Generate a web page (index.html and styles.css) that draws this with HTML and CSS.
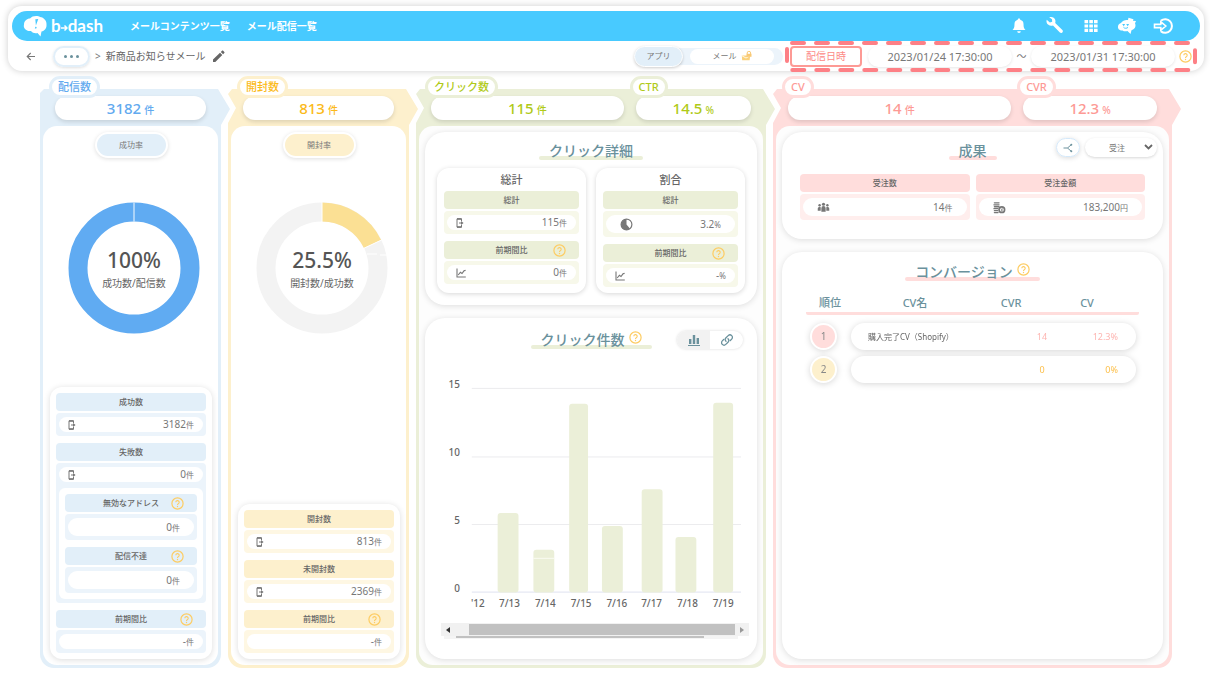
FILE: index.html
```html
<!DOCTYPE html>
<html lang="ja">
<head>
<meta charset="utf-8">
<title>b→dash メール配信レポート</title>
<link rel="stylesheet" href="styles.css">
</head>
<body>
<svg class="sprite" aria-hidden="true">
  <symbol id="i-help" viewBox="0 0 13 13"><circle cx="6.5" cy="6.5" r="5.6" fill="none" stroke="currentColor" stroke-width="1.2"/><path d="M4.8 5.3a1.7 1.7 0 1 1 2.5 1.5c-.6.35-.8.6-.8 1.2" fill="none" stroke="currentColor" stroke-width="1.1"/><circle cx="6.5" cy="9.5" r=".7" fill="currentColor"/></symbol>
  <symbol id="i-phone" viewBox="0 0 8 10"><path d="M5.5 3V.8H1v8.4h4.5V7" fill="none" stroke="currentColor" stroke-width="1"/><path d="M1 1h4.500M1 9h4.500" stroke="currentColor" stroke-width="1.400"/><path d="M3 4.400h2V3l2.600 2L5 7V5.600H3z" fill="currentColor"/></symbol>
  <symbol id="i-line" viewBox="0 0 10 10"><path d="M1 .5V9h8.800M2.200 7l2.200-2.800L6 5.500l2-2.700 1.600-.4" fill="none" stroke="currentColor" stroke-width="1.1"/></symbol>
  <symbol id="i-pie" viewBox="0 0 13 13"><circle cx="6.500" cy="6.500" r="5.400" fill="none" stroke="currentColor" stroke-width="1.200"/><path d="M6.500 1v5.500l3.600 4.200A5.500 5.500 0 1 1 6.500 1z" fill="currentColor"/></symbol>
  <symbol id="i-people" viewBox="0 0 14 11"><g fill="currentColor"><circle cx="7" cy="2" r="1.700"/><circle cx="2.800" cy="3" r="1.300"/><circle cx="11.200" cy="3" r="1.300"/><path d="M4.700 10V6.200a2.300 2.300 0 0 1 4.600 0V10zM.8 9V6.600a2 2 0 0 1 3.200-1.500V9zM10 9V5.100a2 2 0 0 1 3.200 1.500V9z"/></g></symbol>
  <symbol id="i-coins" viewBox="0 0 14 13"><path d="M1.500 1.500h5M1 3.600h5.500M1.500 5.700h5M1 7.800h4.200M1.500 9.900h3.500M1.500 12h4" stroke="currentColor" stroke-width="1.400" stroke-linecap="round"/><circle cx="9.500" cy="8.800" r="3" fill="none" stroke="currentColor" stroke-width="1.800"/><path d="M8.300 7.200l1.200 1.600 1.200-1.600M9.500 8.800v2M8.500 9.300h2" stroke="currentColor" stroke-width=".7" fill="none"/></symbol>
</svg>

<header class="topbar">
  <div class="topbar__main">
    <a class="logo" href="#" aria-label="b→dash">
      <svg class="logo__mark" viewBox="0 0 25 22"><path d="M8 16C3 16.500 0 13 1 9.500 1 6 4 3.500 7 3.500 9 .5 15 .3 17 2c4 .4 7 4 6.500 8 .3 3-2 6-5 6.500L17.500 21.500 14.500 18C12 18.500 9.500 18 8 16z" fill="#fff"/><path d="M15.300 4l-3 .2.600 6.300zM12.300 11.800l1.400.2-.4 1.600-1.500-.2z" fill="#48caff"/></svg>
      <span>b</span><svg class="logo__arrow" viewBox="0 0 7 8"><path d="M0 4h6M3.500 1.500 6 4 3.500 6.500" fill="none" stroke="#fff" stroke-width="1.500"/></svg><span>dash</span>
    </a>
    <nav class="nav">
      <a href="#">メールコンテンツ一覧</a>
      <a href="#">メール配信一覧</a>
    </nav>
    <div class="tools">
      <button aria-label="通知"><svg viewBox="0 0 20 18"><path d="M10 1.500c.9 0 1.200.6 1.200 1.200C13.500 3.300 14.500 5 14.500 7c0 3.500.6 4.800 2 6H3.500c1.400-1.200 2-2.500 2-6 0-2 1-3.700 3.300-4.300 0-.6.300-1.200 1.200-1.200zM8.200 14.200h3.600a1.800 1.800 0 0 1-3.600 0z" fill="#fff"/></svg></button>
      <button aria-label="設定"><svg viewBox="0 0 20 20"><path d="M1.700 3.800l3.200 2.700L7.200 5.800 7 3.300 4.200 1.300C7 .4 9.600 1.600 10.300 4c.3 1.200.2 2.200-.1 2.900l7.200 7c1.500 1.700-.9 4-2.500 2.500L8 9.400C5.400 10.400 2.500 9 1.700 6.800 1.400 5.700 1.400 4.600 1.700 3.800z" fill="#fff"/></svg></button>
      <button aria-label="アプリ一覧"><svg viewBox="0 0 20 18"><path d="M3.500 3h3.600v3.200H3.500zM8.300 3h3.600v3.200H8.300zM13 3h3.600v3.200H13zM3.500 7.400h3.600v3.200H3.500zM8.300 7.400h3.600v3.200H8.300zM13 7.400h3.600v3.200H13zM3.500 11.800h3.600V15H3.500zM8.300 11.800h3.600V15H8.300zM13 11.800h3.600V15H13z" fill="#fff"/></svg></button>
      <button aria-label="サポート"><svg viewBox="0 0 20 18"><path d="M5.500 13.500C3 13.800.5 12 1 9.500 1 7.500 2.500 6.500 4 6 5.500 3.500 8.500 2.500 11 3l.5-2.200 5 1.400-.6 1.600 3.100.3-1 2.200C19.500 9.500 17.500 12.500 14.500 13.200L13.500 17 10.500 14C9 14.500 7 14.500 5.500 13.500z" fill="#fff"/><path d="M5.500 7.500h2.300M9.500 7.500h2.300M6.700 7.500v1.600M10.700 7.500v1.600M6.500 10.300c1 1.300 3.500 1.300 4.500 0" stroke="#48caff" stroke-width="1" fill="none"/></svg></button>
      <button aria-label="ログアウト"><svg viewBox="0 0 20 18"><path d="M8 3.600A6.800 6.800 0 1 1 8 14.400" fill="none" stroke="#fff" stroke-width="2"/><path d="M1.500 7.400h6.300V4.800l5 4.200-5 4.200v-2.600H1.500z" fill="none" stroke="#fff" stroke-width="1.600"/></svg></button>
    </div>
  </div>
  <div class="topbar__sub">
    <button class="back" aria-label="戻る"><svg viewBox="0 0 10 9"><path d="M9 4.500H1.500M4.700 1 1.200 4.500 4.700 8" fill="none" stroke="#777" stroke-width="1.100"/></svg></button>
    <button class="more" aria-label="階層を表示"><i></i><i></i><i></i></button>
    <span class="crumb-sep">&gt;</span>
    <h1 class="crumb">新商品お知らせメール</h1>
    <button class="edit" aria-label="名前を編集"><svg viewBox="0 0 13 13"><path d="M1 9.600 8 2.700l2.300 2.300-7 7H1zM8.800 1.900 10 .8c.4-.4.8-.4 1.200 0l1.100 1.100c.4.4.4.8 0 1.200L11.100 4.200z" fill="#666"/></svg></button>
    <div class="channel">
      <button class="channel__on">アプリ</button>
      <button class="channel__off">メール <svg viewBox="0 0 11 10"><path d="M.8 4.500h8.400l-.6 4.800H1.200z" fill="#fbd27c"/><path d="M1 4.800l4 2.200 4-2.200" fill="none" stroke="#fff" stroke-width=".8"/><path d="M6.200 3V2a1.700 1.700 0 0 1 3.400 0v1" fill="none" stroke="#f8c976" stroke-width="1"/><path d="M5.500 2.800h5v3h-5z" fill="#f8c976"/></svg></button>
    </div>
    <div class="period">
      <svg class="period__dash"><rect x="2" y="2" rx="5"/></svg>
      <button class="period__label">配信日時</button>
      <input type="text" aria-label="開始日時" value="2023/01/24 17:30:00">
      <span class="period__to">〜</span>
      <input type="text" aria-label="終了日時" value="2023/01/31 17:30:00">
      <svg class="help"><use href="#i-help"/></svg>
    </div>
  </div>
</header>

<main class="stages">
  <section class="stage stage--blue">
    <div class="kpis">
      <div class="kpi"><h2>配信数</h2><p>3182<small>件</small></p></div>
    </div>
    <div class="frame"><div class="body">
      <button class="rate">成功率</button>
      <div class="donut">
        <svg viewBox="0 0 132 132"><circle cx="66" cy="66" r="56" fill="none" stroke="#60abf2" stroke-width="19"/><path d="M66 0v20" stroke="#c5e0fa" stroke-width="1.500"/></svg>
        <div class="donut__text"><strong>100%</strong><span>成功数/配信数</span></div>
      </div>
      <div class="stats">
        <div class="stat"><h3>成功数</h3><div class="box"><p class="val"><svg class="ph"><use href="#i-phone"/></svg><span>3182<small>件</small></span></p></div></div>
        <div class="stat"><h3>失敗数</h3><div class="box"><p class="val"><svg class="ph"><use href="#i-phone"/></svg><span>0<small>件</small></span></p>
          <div class="nested">
            <div class="stat"><h3>無効なアドレス<svg class="help"><use href="#i-help"/></svg></h3><div class="box"><p class="val val--roomy"><span>0<small>件</small></span></p></div></div>
            <div class="stat"><h3>配信不達<svg class="help"><use href="#i-help"/></svg></h3><div class="box"><p class="val val--roomy"><span>0<small>件</small></span></p></div></div>
          </div></div></div>
        <div class="stat"><h3>前期間比<svg class="help"><use href="#i-help"/></svg></h3><div class="box"><p class="val"><span>-<small>件</small></span></p></div></div>
      </div>
    </div></div>
  </section>

  <section class="stage stage--yellow stage--next">
    <div class="kpis">
      <div class="kpi"><h2>開封数</h2><p>813<small>件</small></p></div>
    </div>
    <div class="frame"><div class="body">
      <button class="rate">開封率</button>
      <div class="donut">
        <svg viewBox="0 0 132 132"><circle cx="66" cy="66" r="56" fill="none" stroke="#f3f3f3" stroke-width="19"/><path d="M66 10A56 56 0 0 1 116.500 42" fill="none" stroke="#fbe094" stroke-width="19"/><path d="M66 0v20M107.500 46.500l18-8.500M111 52h10M124 53h7" stroke="#fff" stroke-width="1"/></svg>
        <div class="donut__text"><strong>25.5%</strong><span>開封数/成功数</span></div>
      </div>
      <div class="stats">
        <div class="stat"><h3>開封数</h3><div class="box"><p class="val"><svg class="ph"><use href="#i-phone"/></svg><span>813<small>件</small></span></p></div></div>
        <div class="stat"><h3>未開封数</h3><div class="box"><p class="val"><svg class="ph"><use href="#i-phone"/></svg><span>2369<small>件</small></span></p></div></div>
        <div class="stat"><h3>前期間比<svg class="help"><use href="#i-help"/></svg></h3><div class="box"><p class="val"><span>-<small>件</small></span></p></div></div>
      </div>
    </div></div>
  </section>

  <section class="stage stage--green stage--next">
    <div class="kpis">
      <div class="kpi kpi--wide"><h2>クリック数</h2><p>115<small>件</small></p></div>
      <div class="kpi"><h2>CTR</h2><p>14.5<small>%</small></p></div>
    </div>
    <div class="frame"><div class="body body--shade">
      <div class="card card--clicks">
        <div class="card__head"><h2 class="title">クリック詳細</h2></div>
        <div class="pair">
          <div class="mini"><h4>総計</h4>
            <div class="stat"><h3>総計</h3><div class="box"><p class="val"><svg class="ph"><use href="#i-phone"/></svg><span>115<small>件</small></span></p></div></div>
            <div class="stat"><h3>前期間比<svg class="help"><use href="#i-help"/></svg></h3><div class="box"><p class="val"><svg class="ln"><use href="#i-line"/></svg><span>0<small>件</small></span></p></div></div>
          </div>
          <div class="mini"><h4>割合</h4>
            <div class="stat"><h3>総計</h3><div class="box"><p class="val val--roomy"><svg class="big"><use href="#i-pie"/></svg><span>3.2<small>%</small></span></p></div></div>
            <div class="stat"><h3>前期間比<svg class="help"><use href="#i-help"/></svg></h3><div class="box"><p class="val"><svg class="ln"><use href="#i-line"/></svg><span>-<small>%</small></span></p></div></div>
          </div>
        </div>
      </div>
      <div class="card card--chart">
        <div class="card__head"><h2 class="title">クリック件数<svg class="help"><use href="#i-help"/></svg></h2>
          <div class="view">
            <button class="view__on" aria-label="グラフ"><svg viewBox="0 0 14 14"><path d="M2 6h2.400v5H2zM5.800 2h2.400v9H5.800zM9.600 5H12v6H9.600zM1 12h12v1H1z" fill="#6a919c"/></svg></button>
            <button aria-label="リンク"><svg viewBox="0 0 14 14"><g fill="none" stroke="#6a919c" stroke-width="1.300" stroke-linecap="round"><path d="M6 8.300a2.500 2.500 0 0 1 0-3.500L8.200 2.600a2.400 2.400 0 0 1 3.500 3.500L10.300 7.500"/><path d="M8 5.700a2.500 2.500 0 0 1 0 3.500l-2.200 2.200a2.400 2.400 0 0 1-3.500-3.500L3.700 6.500"/></g></svg></button>
          </div>
        </div>
        <div class="plot">
          <svg class="chart" viewBox="0 0 310 250" role="img" aria-label="日別クリック件数">
            <path d="M31 13.500h271M31 82.500h271M31 150.500h271" stroke="#ececee"/>
            <path d="M31 218.500h271" stroke="#dfe3f0"/>
            <g class="bars"><rect x="57" y="139" width="21" height="80" rx="3"/><rect x="93" y="176" width="21" height="43" rx="3"/><rect x="129" y="29" width="19" height="190" rx="3"/><rect x="162" y="152" width="21" height="67" rx="3"/><rect x="202" y="115" width="21" height="104" rx="3"/><rect x="236" y="163" width="21" height="56" rx="3"/><rect x="274" y="28" width="20" height="191" rx="3"/></g>
            <path d="M93 184.500h21" stroke="#fafbf2"/>
            <g class="ylab"><text x="19" y="13">15</text><text x="19" y="82">10</text><text x="19" y="150">5</text><text x="19" y="218">0</text></g>
            <g class="xlab"><text x="37" y="234">'12</text><text x="69" y="234">7/13</text><text x="105" y="234">7/14</text><text x="141" y="234">7/15</text><text x="177" y="234">7/16</text><text x="212" y="234">7/17</text><text x="248" y="234">7/18</text><text x="284" y="234">7/19</text></g>
          </svg>
          <div class="scroll"><span class="scroll__prev"></span><span class="scroll__thumb"></span><span class="scroll__next"></span></div>
          <div class="scroll-thin"><span></span></div>
        </div>
      </div>
    </div></div>
  </section>

  <section class="stage stage--pink stage--next">
    <div class="kpis">
      <div class="kpi kpi--wide"><h2>CV</h2><p>14<small>件</small></p></div>
      <div class="kpi"><h2>CVR</h2><p>12.3<small>%</small></p></div>
    </div>
    <div class="frame"><div class="body body--shade">
      <div class="card card--result">
        <div class="card__head"><h2 class="title">成果</h2>
          <div class="controls">
            <button class="branch" aria-label="分岐"><svg viewBox="0 0 10 10"><path d="M.5 5h4L8.500 1.500M4.500 5l4 3.500" fill="none" stroke="#6a919c" stroke-width="1"/><circle cx="8.300" cy="1.700" r="1" fill="#6a919c"/><circle cx="8.300" cy="8.300" r="1" fill="#6a919c"/></svg></button>
            <div class="select"><select aria-label="成果の種類"><option>受注</option></select><svg viewBox="0 0 9 6"><path d="M1 1l3.500 3.500L8 1" fill="none" stroke="#666" stroke-width="1.800"/></svg></div>
          </div>
        </div>
        <div class="pair">
          <div class="stat"><h3>受注数</h3><div class="box"><p class="val val--roomy"><svg class="big"><use href="#i-people"/></svg><span>14<small>件</small></span></p></div></div>
          <div class="stat"><h3>受注金額</h3><div class="box"><p class="val val--roomy"><svg class="big"><use href="#i-coins"/></svg><span>183,200<small>円</small></span></p></div></div>
        </div>
      </div>
      <div class="card card--conv">
        <div class="card__head"><h2 class="title">コンバージョン<svg class="help"><use href="#i-help"/></svg></h2></div>
        <table class="ranking">
          <thead><tr><th>順位</th><th>CV名</th><th>CVR</th><th>CV</th></tr></thead>
          <tbody>
            <tr><td class="rank"><span>1</span></td><td class="name">購入完了CV（Shopify）</td><td class="num">14</td><td class="pct">12.3%</td></tr>
            <tr class="second"><td class="rank"><span>2</span></td><td class="name"></td><td class="num">0</td><td class="pct">0%</td></tr>
          </tbody>
        </table>
      </div>
    </div></div>
  </section>
</main>
</body>
</html>
```
FILE: styles.css
```css
* { box-sizing: border-box; }

body {
  margin: 0;
  min-height: 100vh;
  padding: 6px 6px 12px 8px;
  display: flex;
  flex-direction: column;
  background: #fff;
  color: #777;
  font: 8px/1.2 "Noto Sans", "Noto Sans CJK JP", sans-serif;
}

h1, h2, h3, h4, p { margin: 0; font-weight: 400; }
button, input, select { font: inherit; color: inherit; border: 0; padding: 0; background: none; }
button { display: flex; align-items: center; justify-content: center; cursor: pointer; }
a { color: inherit; text-decoration: none; }
svg { display: block; flex: none; }
.sprite { position: absolute; width: 0; height: 0; }
.help { width: 13px; height: 13px; color: #fdcc62; }

/* top bar */
.topbar {
  padding: 5px 4px 0;
  border-radius: 14px;
  background: #fff;
  box-shadow: 0 0 7px rgba(0, 0, 0, .2);
}
.topbar__main {
  height: 30px;
  padding: 0 27px 0 11px;
  display: flex;
  align-items: center;
  border-radius: 15px;
  background: #48caff;
  color: #fff;
}
.logo { display: flex; align-items: center; width: 107px; font: 700 17px/22px Lato, sans-serif; }
.logo__mark { width: 25px; height: 22px; margin-right: 3px; }
.logo__arrow { width: 7px; height: 8px; margin-top: 3px; }
.nav { display: flex; gap: 17px; font-size: 10px; font-weight: 700; }
.tools { margin-left: auto; display: flex; gap: 16px; }
.tools button, .tools svg { width: 20px; height: 20px; }

.topbar__sub { height: 30px; display: flex; align-items: center; font-size: 10px; }
.back { width: 18px; margin-left: 10px; }
.back svg { width: 10px; height: 9px; }
.more {
  width: 37px; height: 21px; margin-left: 13px; gap: 3px;
  border: 2px solid #e2eff9; border-radius: 11px;
  box-shadow: 0 1px 3px rgba(0, 0, 0, .12);
}
.more i { width: 3px; height: 3px; border-radius: 50%; background: #6a919c; }
.crumb-sep { margin: 0 5px; }
.crumb { font-size: 10px; color: #666; }
.edit { margin-left: 6px; }
.edit svg { width: 13px; height: 13px; }

.channel {
  height: 17px; margin-left: auto; padding-right: 9px;
  display: flex; align-items: center; gap: 7px;
  border-radius: 9px; background: #ecf4fb; font-size: 8px;
}
.channel__on {
  width: 49px; height: 21px;
  border: 1px solid #fff; border-radius: 11px; background: #e2eff9;
  box-shadow: 0 1px 3px rgba(0, 0, 0, .2);
}
.channel__off { width: 84px; height: 15px; gap: 4px; border-radius: 8px; background: #fff; }
.channel__off svg { width: 11px; height: 10px; }

.period { position: relative; height: 30px; margin: 0 3px 0 2px; padding: 0 5px; display: flex; align-items: center; }
.period__dash { position: absolute; inset: 0; width: 100%; height: 100%; overflow: visible; pointer-events: none; }
.period__dash rect {
  width: calc(100% - 4px); height: calc(100% - 3px);
  fill: none; stroke: #fd8086; stroke-width: 4; stroke-linecap: round; stroke-dasharray: 12 12;
}
.period__label { width: 72px; height: 21px; margin-right: 6px; border: 2px solid #fd9a95; border-radius: 4px; color: #fd8a86; }
.period input {
  width: 144px; height: 21px; border-radius: 11px; background: #fff;
  box-shadow: 0 1px 3px rgba(0, 0, 0, .1); font-size: 11px; text-align: center;
}
.period__to { width: 19px; text-align: center; }
.period .help { margin-left: 4px; }

/* funnel stages */
.stages {
  flex: 1;
  margin: 18px 32px 0;
  display: grid;
  grid-template-columns: 181fr 181fr 350fr 399fr;
  gap: 7px;
}
.stage { position: relative; display: flex; flex-direction: column; min-width: 0; }
.stage::before {
  content: ""; position: absolute; z-index: -1; top: 0; left: 0; right: -9px; height: 37px;
  background: var(--tint);
  clip-path: polygon(4px 0, calc(100% - 12px) 0, 100% 20px, calc(100% - 9px) 36px, calc(100% - 9px) 100%, 0 100%, 0 4px);
}
.stage--next::before {
  clip-path: polygon(4px 0, calc(100% - 12px) 0, 100% 20px, calc(100% - 9px) 36px, calc(100% - 9px) 100%, 0 100%, 0 34px, 8px 19px, 0 5px);
}
.stage--blue { --tint: #e2eff9; --pale: #ecf4fb; --strong: #62aaef; }
.stage--yellow { --tint: #fdf0cd; --pale: #fef7e3; --strong: #fbba1a; }
.stage--green { --tint: #ebefd8; --pale: #f7f8ea; --strong: #b0ca18; }
.stage--pink { --tint: #ffdddc; --pale: #ffeeed; --strong: #fd9a95; }

.kpis { height: 37px; padding: 7px 15px 6px; display: flex; gap: 12px; color: var(--strong); }
.kpi { position: relative; flex: 3; }
.kpi--wide { flex: 5; }
.kpi h2 {
  position: absolute; z-index: 1; top: -20px; left: -6px; padding: 0 6px;
  border: 3px solid var(--tint); border-radius: 11px; background: #fff;
  font-size: 11px; font-weight: 500; line-height: 16px; white-space: nowrap;
}
.kpi p {
  height: 24px; border-radius: 12px; background: #fff; text-align: center;
  font-size: 15px; font-weight: 500; line-height: 24px;
  box-shadow: 0 2px 4px rgba(0, 0, 0, .13);
}
.kpi small { margin-left: 3px; font-size: 10px; }

.frame { flex: 1; display: flex; padding: 0 3px 3px; border-radius: 0 0 14px 14px; background: var(--tint); }
.body {
  flex: 1; min-width: 0; padding: 6px 6px 6px 7px; display: flex; flex-direction: column;
  border-radius: 14px; background: #fff;
}
.body--shade { padding: 6px; background: #fdfdfd; gap: 13px; }

.rate {
  align-self: center; width: 73px; height: 26px;
  border: 2px solid #fff; border-radius: 13px; background: var(--tint);
  box-shadow: 0 1px 4px rgba(0, 0, 0, .13);
}
.donut { position: relative; align-self: center; margin: 44px 0 0 6px; }
.donut svg { width: 132px; height: 132px; }
.donut__text {
  position: absolute; inset: 0; padding-top: 4px; display: flex; flex-direction: column;
  align-items: center; justify-content: center; font-size: 10px; color: #666;
}
.donut__text strong { font-size: 21px; font-weight: 500; line-height: 26px; color: #555; }
.donut__text span { line-height: 20px; }

.stats {
  margin-top: auto; padding: 6px; display: grid; gap: 7px;
  border-radius: 12px; background: #fff; box-shadow: 0 1px 6px rgba(0, 0, 0, .14);
}
.stat { display: grid; gap: 2px; flex: 1; min-width: 0; }
.stat h3 {
  height: 18px; padding: 0 13px; display: grid; grid-template-columns: 1fr auto 1fr; align-items: center;
  border-radius: 4px; background: var(--tint); font-size: 8px; font-weight: 500; color: #666;
}
.stat h3::before { content: ""; }
.stat h3 .help { justify-self: end; }
.box { padding: 4px 3px; border-radius: 4px; background: var(--pale); }
.val {
  height: 15px; padding: 0 9px; display: flex; align-items: center;
  border-radius: 10px; background: #fff; font-size: 10px; line-height: 15px;
}
.val--roomy { height: 18px; padding: 0 14px; }
.val span { margin-left: auto; }
.val small { font-size: 8px; }
.ph { width: 8px; height: 10px; }
.ln { width: 10px; height: 10px; }
.big { width: 13px; height: 13px; }
.nested { margin: 6px 0 0; padding: 6px; display: grid; gap: 7px; border-radius: 6px; background: #fff; }

/* cards */
.card { border-radius: 20px; background: #fff; box-shadow: 0 1px 6px rgba(0, 0, 0, .13); }
.card__head { display: grid; grid-template-columns: 1fr auto 1fr; align-items: center; }
.title {
  grid-column: 2; position: relative; isolation: isolate; height: 22px; padding: 0 10px;
  display: flex; gap: 4px; color: #6a919c; font-size: 14px; font-weight: 500; line-height: 22px;
}
.title::before {
  content: ""; position: absolute; z-index: -1; inset: 16px 0 auto; height: 4px;
  border-radius: 2px; background: var(--tint);
}
.title .help { margin-top: 2px; }
.pair { display: flex; gap: 10px; }

.card--clicks { padding: 8px 12px 12px; }
.card--clicks .pair { margin-top: 6px; }
.mini {
  flex: 1; padding: 3px 7px 6px; display: flex; flex-direction: column; gap: 7px;
  border-radius: 12px; box-shadow: 0 1px 5px rgba(0, 0, 0, .16);
}
.mini .stat { flex: none; }
.mini h4 { height: 18px; margin-bottom: -5px; text-align: center; font-size: 11px; line-height: 18px; font-weight: 500; color: #666; }

.card--chart { flex: 1; padding: 11px 14px 14px; }
.view {
  justify-self: end; display: flex; overflow: hidden;
  border-radius: 9px; box-shadow: 0 0 3px rgba(0, 0, 0, .15);
}
.view button { width: 33px; height: 18px; }
.view__on { background: #f2f2f2; }
.view svg { width: 14px; height: 14px; }
.plot { margin: 24px -6px 0 2px; }
.chart { width: 100%; font-size: 10px; font-weight: 500; }
.bars { fill: #ebefd8; }
.ylab, .xlab { fill: #666; }
.ylab { text-anchor: end; }
.xlab { text-anchor: middle; }
.scroll { height: 13px; display: flex; align-items: center; background: #f1f1f1; }
.scroll__thumb { flex: 1; height: 11px; background: #c1c1c1; }
.scroll__prev, .scroll__next { width: 14px; display: flex; justify-content: center; }
.scroll__prev { margin-right: 14px; }
.scroll__prev::before, .scroll__next::before { content: ""; border: 3px solid transparent; }
.scroll__prev::before { border-left: 0; border-right-width: 4px; border-right-color: #333; }
.scroll__next::before { border-right: 0; border-left-width: 4px; border-left-color: #999; }
.scroll-thin { height: 3px; margin: 0 11px 0 3px; padding: 0 11% 0 4%; background: #f4f4f4; }
.scroll-thin span { display: block; height: 2px; background: #c1c1c1; }

.card--result { padding: 6px 6px 19px; }
.card--result .card__head { align-items: start; }
.card--result .title { margin-top: 2px; }
.card--result .pair { gap: 6px; margin: 12px 12px 0; }
.controls { justify-self: end; display: flex; gap: 5px; }
.branch { width: 24px; height: 19px; border: 1px solid #d5e9fa; border-radius: 10px; box-shadow: 0 1px 5px rgba(0, 0, 0, .15); }
.branch svg { width: 10px; height: 10px; }
.select { position: relative; border-radius: 10px; box-shadow: 0 1px 3px rgba(0, 0, 0, .16); }
.select select { display: block; width: 72px; height: 19px; padding-left: 24px; appearance: none; font-size: 8px; }
.select svg { position: absolute; top: 6px; right: 4px; width: 9px; height: 6px; pointer-events: none; }

.card--conv { flex: 1; padding: 9px 24px 20px; }
.ranking { display: block; margin-top: 11px; }
.ranking thead, .ranking tbody { display: grid; gap: 6px; }
.ranking tr { display: grid; }
.ranking thead tr {
  grid-template-columns: 48px 122fr 70fr 82fr 11px;
  border-bottom: 3px solid var(--tint); border-radius: 2px;
}
.ranking th { padding: 0; color: #6a919c; font-size: 11px; font-weight: 500; line-height: 18px; }
.ranking tbody { margin-top: 8px; }
.ranking tbody tr {
  grid-template-columns: 45px 1fr 70px 59px; margin-right: 3px;
  filter: drop-shadow(0 1px 3px rgba(0, 0, 0, .16));
}
.ranking td { padding: 0; height: 27px; line-height: 27px; background: #fff; color: #fdb5b1; }
.ranking td.rank { background: none; }
.rank span {
  display: block; width: 27px; height: 27px; margin-left: 4px; text-align: center;
  border: 2px solid #fff; border-radius: 50%; background: #ffdddc; color: #888; font-size: 10px; line-height: 23px;
}
.ranking td.name { padding-left: 17px; border-radius: 14px 0 0 14px; color: #666; }
.num { text-align: center; }
.ranking td.pct { padding-right: 18px; border-radius: 0 14px 14px 0; text-align: right; }
.num, .pct { font-size: 9px; }
.ranking .second td { color: #fcc04d; }
.ranking .second .rank span { background: #fdf0cd; color: #888; }
```
